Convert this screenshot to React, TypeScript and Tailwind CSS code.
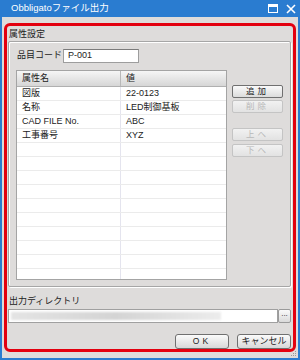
import React from 'react';

const rows = [
  { name: '図版', value: '22-0123' },
  { name: '名称', value: 'LED制御基板' },
  { name: 'CAD FILE No.', value: 'ABC' },
  { name: '工事番号', value: 'XYZ' },
];

const emptyRows = Array.from({ length: 9 });

function SideButton({ label, disabled }: { label: string; disabled?: boolean }) {
  return (
    <button
      type="button"
      className={`h-[13px] w-[51px] rounded-[2px] border text-[8.5px] leading-none tracking-[3px] ${
        disabled
          ? 'border-[#c4c4c4] bg-gradient-to-b from-[#f2f2f2] to-[#e2e2e2] text-[#b8b8b8]'
          : 'border-[#707070] bg-gradient-to-b from-[#fafafa] to-[#dcdcdc] text-[#222]'
      }`}
    >
      {label}
    </button>
  );
}

export default function App() {
  return (
    <div
      className="relative flex h-[360px] w-[300px] flex-col border-x-2 border-b-2 border-[#2a7cd0] bg-[#dedcdb] text-[9px] text-[#222]"
      style={{ fontFamily: '"Liberation Sans", "Noto Sans CJK JP", sans-serif' }}
    >
      {/* Title bar */}
      <div className="-mx-[2px] flex h-[17px] shrink-0 items-center bg-[#2a7cd0] pl-[11px] pr-[4px] text-white">
        <span className="text-[9.5px]">Obbligatoファイル出力</span>
        <div className="ml-auto flex items-center gap-[8px]">
          <svg width="10" height="9" viewBox="0 0 10 9">
            <rect x="0.5" y="0.5" width="9" height="8" fill="none" stroke="white" />
            <rect x="0" y="0" width="10" height="3" fill="white" />
          </svg>
          <svg width="10" height="10" viewBox="0 0 10 10">
            <path d="M1 1 L9 9 M9 1 L1 9" stroke="white" strokeWidth="1.6" />
          </svg>
        </div>
      </div>

      <div className="flex flex-1 flex-col pl-[6px] pr-[7px]">
        {/* 属性設定 */}
        <div className="mt-[10px] h-[14px] pl-[1px] leading-[14px]">属性設定</div>
        <div className="flex h-[246px] shrink-0 flex-col rounded-[2px] border border-[#a6a6a6] px-[7px] pt-[7px] shadow-[inset_1px_1px_0_#fff,1px_1px_0_#fff]">
          <div className="flex h-[14px] items-center whitespace-nowrap">
            <span className="w-[47px] pl-[1px]">品目コード</span>
            <div className="flex h-[14px] w-[76px] items-center border border-[#9d9d9d] border-t-[#7b7b7b] bg-white pl-[4px]">
              P-001
            </div>
          </div>

          <div className="mt-[7px] flex gap-[5px]">
            {/* Table */}
            <div className="flex h-[210px] w-[213px] flex-col overflow-hidden border border-[#a4a4a4] bg-white">
              <div className="flex h-[16px] shrink-0 border-b border-[#b0b0b0] bg-gradient-to-b from-[#f6f6f6] to-[#d6d6d6]">
                <div className="flex w-[104px] items-center border-r border-[#b8b8b8] pl-[5px]">属性名</div>
                <div className="flex flex-1 items-center pl-[5px]">値</div>
              </div>
              {rows.map((r) => (
                <div key={r.name} className="flex h-[14px] shrink-0 border-b-[1.5px] border-[#ebebeb]">
                  <div className="flex w-[104px] items-center border-r border-[#e4e4ee] pl-[5px]">{r.name}</div>
                  <div className="flex flex-1 items-center pl-[5px]">{r.value}</div>
                </div>
              ))}
              {emptyRows.map((_, i) => (
                <div key={i} className="flex h-[14px] shrink-0 border-b-[1.5px] border-[#ebebeb]">
                  <div className="w-[104px] border-r border-[#e4e4ee]" />
                  <div className="flex-1" />
                </div>
              ))}
              <div className="flex flex-1">
                <div className="w-[104px] border-r border-[#e4e4ee]" />
              </div>
            </div>

            {/* Side buttons */}
            <div className="mt-[15px] flex flex-col">
              <SideButton label="追加" />
              <div className="mt-[2px]">
                <SideButton label="削除" disabled />
              </div>
              <div className="mt-[14px]">
                <SideButton label="上へ" disabled />
              </div>
              <div className="mt-[2px]">
                <SideButton label="下へ" disabled />
              </div>
            </div>
          </div>
        </div>

        {/* 出力ディレクトリ */}
        <div className="mt-[8px] h-[13px] pl-[1px] leading-[13px]">出力ディレクトリ</div>
        <div className="mt-[1px] flex h-[14px]">
          <div className="relative flex-1 overflow-hidden border border-[#a0a0a0] bg-white">
            <div className="absolute left-[2px] top-[2px] h-[8px] w-[210px] bg-gradient-to-r from-[#e4e4e4] via-[#d4d4d4] to-[#ececec] blur-[1px]" />
          </div>
          <button
            type="button"
            className="flex w-[13px] items-start justify-center rounded-[2px] border border-[#9a9a9a] bg-gradient-to-b from-[#fafafa] to-[#dadada] text-[8px] leading-[8px]"
          >
            ...
          </button>
        </div>

        <div className="mt-[11px] flex justify-end gap-[8px]">
          <button
            type="button"
            className="h-[15px] w-[54px] rounded-[3px] border border-[#707070] bg-gradient-to-b from-[#fbfbfb] to-[#d8d8d8] text-[8.5px] tracking-[3px]"
          >
            OK
          </button>
          <button
            type="button"
            className="h-[15px] w-[54px] rounded-[3px] border border-[#707070] bg-gradient-to-b from-[#fbfbfb] to-[#d8d8d8] text-[9px]"
          >
            キャンセル
          </button>
        </div>
      </div>

      {/* Resize grip */}
      <svg className="absolute bottom-[1px] right-[1px]" width="7" height="7" viewBox="0 0 7 7">
        <rect x="5" y="1" width="1" height="1" fill="#999" />
        <rect x="3" y="3" width="1" height="1" fill="#999" />
        <rect x="5" y="3" width="1" height="1" fill="#999" />
        <rect x="1" y="5" width="1" height="1" fill="#999" />
        <rect x="3" y="5" width="1" height="1" fill="#999" />
        <rect x="5" y="5" width="1" height="1" fill="#999" />
      </svg>

      {/* Red highlight annotation */}
      <div className="pointer-events-none absolute left-[2px] top-[23px] h-[329px] w-[292px] rounded-[6px] border-[3px] border-[#e3000f]" />
    </div>
  );
}
